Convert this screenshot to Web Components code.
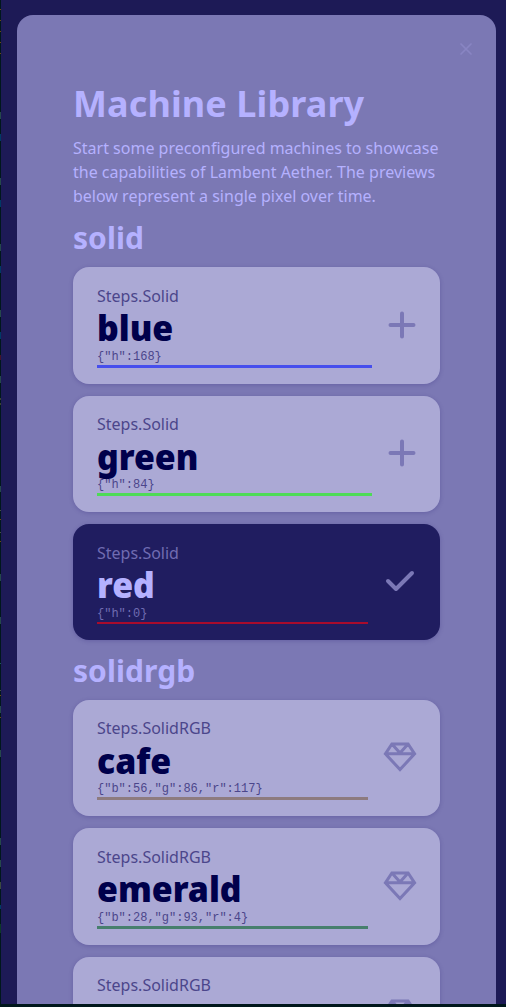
<!DOCTYPE html>
<html lang="en">
<head>
<meta charset="utf-8">
<title>Machine Library</title>
<style>
html,body{margin:0;height:100%;overflow:hidden;background:#00171c}
body{font-family:"Noto Sans",sans-serif}
</style>
</head>
<body>
<app-window>
  <modal-panel>
    <library-intro heading="Machine Library">Start some preconfigured machines to showcase the capabilities of Lambent Aether. The previews below represent a single pixel over time.</library-intro>
    <machine-group name="solid">
      <machine-card kind="Steps.Solid" name="blue" params='{"h":168}' color="#464eed" icon="plus" style="--card-h:117px;--params-y:1px"></machine-card>
      <machine-card kind="Steps.Solid" name="green" params='{"h":84}' color="#4ddb55" icon="plus" style="--kind-y:-1px;--bar-y:-1px"></machine-card>
      <machine-card kind="Steps.Solid" name="red" params='{"h":0}' color="#a80c2c" icon="check" active style="--bar-h:2px;--params-y:1px"></machine-card>
    </machine-group>
    <machine-group name="solidrgb" style="--group-top:13px">
      <machine-card kind="Steps.SolidRGB" name="cafe" params='{"b":56,"g":86,"r":117}' color="#8d7b7f" icon="gem" style="--kind-y:-1px;--bar-y:-1px"></machine-card>
      <machine-card kind="Steps.SolidRGB" name="emerald" params='{"b":28,"g":93,"r":4}' color="#477f6d" icon="gem" style="--card-h:117px;--params-y:1px"></machine-card>
      <machine-card kind="Steps.SolidRGB" name="gold" params='{"b":0,"g":84,"r":100}' color="#aa9a60" icon="gem" style="--kind-y:-1px"></machine-card>
    </machine-group>
  </modal-panel>
</app-window>
<script>
function define(tag, render) {
  customElements.define(tag, class extends HTMLElement {
    connectedCallback() {
      if (!this.shadowRoot) this.attachShadow({mode: 'open'}).innerHTML = render(this);
    }
  });
}

const icons = {
  plus: '<path d="M18 5.5v23M6.5 17h23" stroke-width="4"/>',
  check: '<path d="M4 17.3L12 25.3 28 9.3" transform="translate(2 -.3)" stroke-width="4"/>',
  gem: '<path d="M9.9 4h16.2L32.6 13.8 18 29.6 3.4 13.8zM3.4 13.8h29.2M9.9 4L18 13.1 26.1 4" stroke-width="3" stroke-linejoin="miter"/>',
  close: '<path d="M1 1l10 10M11 1L1 11" stroke-width="1.7"/>'
};

define('line-icon', el => {
  const n = el.getAttribute('name');
  const size = n === 'close' ? 12 : 36;
  return `<style>:host{display:block;flex:none}svg{display:block}</style>
  <svg width="${size}" height="${size}" viewBox="0 0 ${size} ${size}" fill="none" stroke="currentColor" stroke-linecap="round" stroke-linejoin="round">${icons[n]}</svg>`;
});

/* Slivers of the code editor behind the window: [top, height, colour] */
const slivers = [
  [9,1,'#6b4a12'],[20,1,'#6b4a12'],[31,1,'#6b4a12'],[42,1,'#6b4a12'],[53,1,'#6b4a12'],
  [112,7,'#25484c'],[134,7,'#003a66'],[178,7,'#25484c'],[200,7,'#003a66'],[244,7,'#25484c'],
  [266,7,'#003a66'],[310,7,'#25484c'],[332,7,'#003a66'],[355,5,'#451428'],[376,7,'#25484c'],
  [398,2,'#39452f'],[403,2,'#39452f'],[486,6,'#25484c'],[510,1,'#445044'],[519,1,'#6b4a12'],
  [532,1,'#445044'],[541,1,'#6b4a12'],[574,7,'#25484c'],[617,7,'#25484c'],[663,1,'#1b5a58'],
  [690,1,'#445044'],[695,1,'#6b4a12'],[706,7,'#25484c'],[717,1,'#6b4a12'],[750,7,'#25484c'],
  [838,7,'#25484c'],[860,7,'#25484c'],[882,7,'#3b4a40'],[905,4,'#003a66'],[924,9,'#0d3a28']
];
const stops = slivers.map(([y, h, c]) =>
  `transparent ${y}px,${c} ${y}px,${c} ${y + h}px,transparent ${y + h}px`).join(',');

define('app-window', () => `<style>
:host{display:block;padding-left:1px;background:linear-gradient(transparent 0,${stops}) 0 0/1px 1004px no-repeat}
div{box-sizing:border-box;height:1004px;padding:15px 10px 0 16px;background:#1d1a56;overflow:hidden}
</style><div><slot></slot></div>`);

define('modal-panel', () => `<style>
:host{display:block;box-sizing:border-box;height:1100px;padding:28px 56px 0;background:#7b78b4;border-radius:16px 16px 0 0}
header{display:flex;justify-content:flex-end;height:41px;margin-right:-32px;color:#8985c3}
</style><header><line-icon name="close"></line-icon></header><slot></slot>`);

define('library-intro', el => `<style>
:host{display:block;color:#b5b1ff}
h1{margin:0;font-size:36px;line-height:40px;font-weight:700;white-space:nowrap;letter-spacing:.1px}
p{margin:12px 0 0;font-size:16px;line-height:24px}
</style><h1>${el.getAttribute('heading')}</h1><p><slot></slot></p>`);

define('machine-group', el => `<style>
:host{display:block;color:#b5b1ff}
h2{margin:0;padding:var(--group-top,12px) 0 11px;font-size:30px;line-height:36px;font-weight:700;letter-spacing:.06px}
div{display:flex;flex-direction:column;gap:12px}
</style><h2>${el.getAttribute('name')}</h2><div><slot></slot></div>`);

define('machine-card', el => {
  const plus = el.getAttribute('icon') === 'plus';
  return `<style>
:host{display:flex;align-items:center;gap:${plus ? 12 : 14}px;box-sizing:border-box;height:var(--card-h,116px);padding:16px ${plus ? 20 : 22}px 16px 24px;border-radius:16px;background:#aba9d5;box-shadow:0 1px 4px rgba(60,50,130,.32);color:#7b78b6}
:host([active]){background:#201d60}
section{flex:1;align-self:stretch;min-width:0}
.kind{font-size:16px;line-height:24px;padding-top:calc(1px + var(--kind-y,0px));margin-bottom:calc(0px - var(--kind-y,0px));color:#4b468b}
.name{font-size:36px;line-height:40px;font-weight:900;transform:scaleX(.94);transform-origin:0 50%;color:#00004b}
.params{font:12px/16px "Liberation Mono",monospace;color:#4b468b;padding-top:var(--params-y,0px);margin-bottom:calc(0px - var(--params-y,0px))}
:host([active]) .kind,:host([active]) .params{color:#706cb2}
:host([active]) .name{color:#b5b1ff}
.bar{height:var(--bar-h,3px);margin-top:calc(1px + var(--bar-y,0px));background:${el.getAttribute('color')}}
</style>
<section><div class="kind">${el.getAttribute('kind')}</div><div class="name">${el.getAttribute('name')}</div><div class="params">${el.getAttribute('params')}</div><div class="bar"></div></section>
<line-icon name="${el.getAttribute('icon')}"></line-icon>`;
});
</script>
</body>
</html>
